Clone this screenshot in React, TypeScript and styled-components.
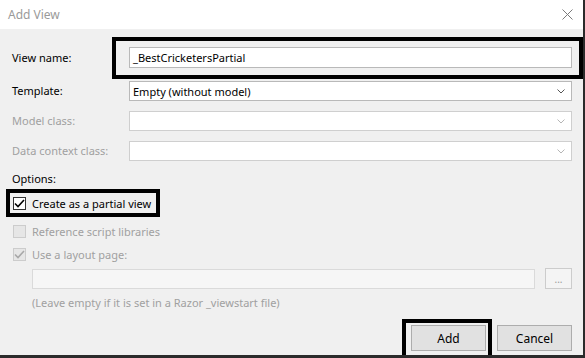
import React from 'react';
import styled, { createGlobalStyle } from 'styled-components';

const Global = createGlobalStyle`
    html, body {
        margin: 0;
        padding: 0;
        background: #f0f0f0;
    }
    body {
        font-family: "Noto Sans", "Open Sans", sans-serif;
        font-size: 11px;
        color: #000;
    }
`;

const Dialog = styled.div`
    width: 585px;
    height: 358px;
    box-sizing: border-box;
    border-right: 2px solid #2b2b2b;
    border-bottom: 3px solid #2b2b2b;
    background: #f0f0f0;
    overflow: hidden;
    display: flex;
    flex-direction: column;
`;

const TitleBar = styled.div`
    height: 29px;
    flex: none;
    background: #fff;
    display: flex;
    align-items: center;
    justify-content: space-between;
    padding: 0 10px 0 8px;
`;

const Title = styled.span`
    color: #9a9a9a;
    font-size: 12px;
`;

const Body = styled.div`
    flex: 1;
    display: flex;
    flex-direction: column;
    padding-top: 8px;
`;

const Row = styled.div<{ $top?: number }>`
    display: flex;
    align-items: center;
    margin-top: ${p => p.$top ?? 0}px;
    padding-right: 11px;
`;

const Label = styled.div<{ $disabled?: boolean; $width?: number }>`
    width: ${p => p.$width ?? 129}px;
    flex: none;
    box-sizing: border-box;
    padding-left: 12px;
    white-space: nowrap;
    color: ${p => (p.$disabled ? '#a0a0a0' : '#000')};
    line-height: 16px;
`;

const Highlight = styled.div`
    border: 4px solid #000;
    box-sizing: border-box;
`;

const NameBox = styled(Highlight)`
    flex: 1;
    padding: 6px 7px 7px 13px;
    margin-right: -11px;
`;

const TextInput = styled.div`
    height: 21px;
    box-sizing: border-box;
    border: 1px solid #b9b9b9;
    background: #fff;
    display: flex;
    align-items: center;
    padding-left: 3px;
`;

const Select = styled.div<{ $disabled?: boolean }>`
    flex: 1;
    height: 20px;
    box-sizing: border-box;
    border: 1px solid ${p => (p.$disabled ? '#cfcfcf' : '#b9b9b9')};
    background: #fff;
    display: flex;
    align-items: center;
    justify-content: space-between;
    padding: 0 6px 0 3px;
    color: ${p => (p.$disabled ? '#a0a0a0' : '#000')};
`;

const Options = styled.div`
    padding-left: 12px;
    margin-top: 10px;
    line-height: 16px;
`;

const CheckRow = styled.div<{ $disabled?: boolean }>`
    display: flex;
    align-items: center;
    gap: 6px;
    height: 20px;
    white-space: nowrap;
    color: ${p => (p.$disabled ? '#a0a0a0' : '#000')};
`;

const PartialBox = styled(Highlight)`
    align-self: flex-start;
    margin: 2px 0 0 6px;
    padding: 0 5px 0 3px;
`;

const PlainCheck = styled(CheckRow)<{ $top: number }>`
    padding-left: 13px;
    margin-top: ${p => p.$top}px;
`;

const Box = styled.span<{ $disabled?: boolean }>`
    width: 13px;
    height: 13px;
    box-sizing: border-box;
    flex: none;
    border: 1px solid ${p => (p.$disabled ? '#cccccc' : '#333')};
    background: ${p => (p.$disabled ? '#e6e6e6' : '#fff')};
    display: flex;
    align-items: center;
    justify-content: center;
`;

const LayoutRow = styled.div`
    display: flex;
    align-items: center;
    gap: 10px;
    padding: 0 11px 0 32px;
    margin-top: 4px;
`;

const LayoutInput = styled.div`
    flex: 1;
    height: 20px;
    box-sizing: border-box;
    border: 1px solid #dadada;
    background: #f6f6f6;
`;

const Browse = styled.div`
    width: 27px;
    height: 21px;
    box-sizing: border-box;
    border: 1px solid #cccccc;
    background: #f4f4f4;
    color: #9a9a9a;
    display: flex;
    align-items: center;
    justify-content: center;
    font-size: 10px;
`;

const Hint = styled.div`
    padding-left: 32px;
    margin-top: 6px;
    color: #a0a0a0;
    line-height: 16px;
    white-space: nowrap;
`;

const Footer = styled.div`
    display: flex;
    justify-content: flex-end;
    align-items: flex-start;
    margin-top: 8px;
    padding-right: 11px;
`;

const AddBox = styled(Highlight)`
    padding: 2px 2px 8px 5px;
`;

const Button = styled.div`
    width: 75px;
    height: 26px;
    box-sizing: border-box;
    border: 1px solid #adadad;
    background: #e1e1e1;
    display: flex;
    align-items: center;
    justify-content: center;
    font-size: 12px;
`;

const CancelButton = styled(Button)`
    margin: 6px 0 0 5px;
`;

const Chevron = ({ color }: { color: string }) => (
    <svg width="8" height="5" viewBox="0 0 8 5">
        <polyline points="0.5,0.5 4,4 7.5,0.5" fill="none" stroke={color} strokeWidth="1" />
    </svg>
);

const Tick = ({ color }: { color: string }) => (
    <svg width="11" height="9" viewBox="0 0 11 9">
        <polyline points="1,4.5 4,7.5 10,1" fill="none" stroke={color} strokeWidth="1.6" />
    </svg>
);

const App: React.FC = () => {
    return (
        <>
            <Global />
            <Dialog>
                <TitleBar>
                    <Title>Add View</Title>
                    <svg width="11" height="11" viewBox="0 0 11 11">
                        <path d="M0.5 0.5 L10.5 10.5 M10.5 0.5 L0.5 10.5" stroke="#7a7a7a" strokeWidth="1" />
                    </svg>
                </TitleBar>
                <Body>
                    <Row>
                        <Label $width={112}>View name:</Label>
                        <NameBox>
                            <TextInput>_BestCricketersPartial</TextInput>
                        </NameBox>
                    </Row>
                    <Row $top={2}>
                        <Label>Template:</Label>
                        <Select>
                            Empty (without model)
                            <Chevron color="#555" />
                        </Select>
                    </Row>
                    <Row $top={10}>
                        <Label $disabled>Model class:</Label>
                        <Select $disabled>
                            <span />
                            <Chevron color="#b5b5b5" />
                        </Select>
                    </Row>
                    <Row $top={10}>
                        <Label $disabled>Data context class:</Label>
                        <Select $disabled>
                            <span />
                            <Chevron color="#b5b5b5" />
                        </Select>
                    </Row>
                    <Options>Options:</Options>
                    <PartialBox>
                        <CheckRow>
                            <Box>
                                <Tick color="#000" />
                            </Box>
                            Create as a partial view
                        </CheckRow>
                    </PartialBox>
                    <PlainCheck $disabled $top={4}>
                        <Box $disabled />
                        Reference script libraries
                    </PlainCheck>
                    <PlainCheck $disabled $top={3}>
                        <Box $disabled>
                            <Tick color="#a8a8a8" />
                        </Box>
                        Use a layout page:
                    </PlainCheck>
                    <LayoutRow>
                        <LayoutInput />
                        <Browse>...</Browse>
                    </LayoutRow>
                    <Hint>(Leave empty if it is set in a Razor _viewstart file)</Hint>
                    <Footer>
                        <AddBox>
                            <Button>Add</Button>
                        </AddBox>
                        <CancelButton>Cancel</CancelButton>
                    </Footer>
                </Body>
            </Dialog>
        </>
    );
};

export default App;
